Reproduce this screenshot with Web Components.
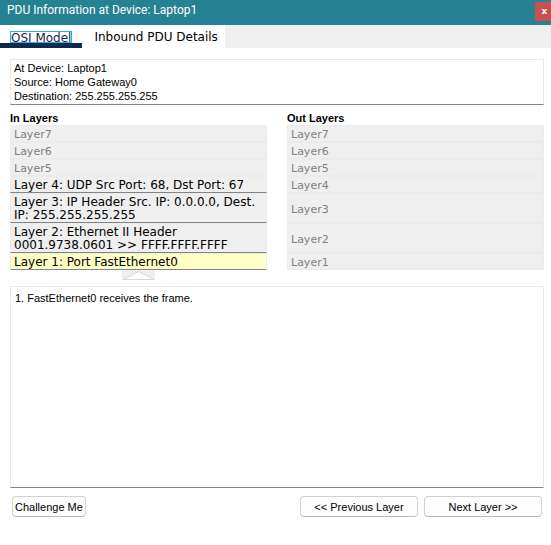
<!DOCTYPE html>
<html lang="en">
<head>
<meta charset="utf-8">
<title>PDU Information at Device: Laptop1</title>
<style>
  html, body { margin: 0; }
  body {
    --edge: #e9e9e9;
    --line: #848484;
    --tint: #efefef;
    --wide: Verdana, "DejaVu Sans", sans-serif;
    background: #fff;
    color: #000;
    font: 11px/14px "Liberation Sans", Arial, sans-serif;
  }
</style>
</head>
<body>
<pdu-window>
  <title-bar slot="title">PDU Information at Device: Laptop1</title-bar>
  <tab-strip slot="tabs">
    <tab-item selected>OSI Model</tab-item>
    <tab-item>Inbound PDU Details</tab-item>
  </tab-strip>
  <text-panel>
    <div>At Device: Laptop1</div>
    <div>Source: Home Gateway0</div>
    <div>Destination: 255.255.255.255</div>
  </text-panel>
  <layer-board>
    <layer-column heading="In Layers">
      <layer-row>Layer7</layer-row>
      <layer-row>Layer6</layer-row>
      <layer-row>Layer5</layer-row>
      <layer-row active>Layer 4: UDP Src Port: 68, Dst Port: 67</layer-row>
      <layer-row active>Layer 3: IP Header Src. IP: 0.0.0.0, Dest. IP: 255.255.255.255</layer-row>
      <layer-row active>Layer 2: Ethernet II Header 0001.9738.0601 &gt;&gt; FFFF.FFFF.FFFF</layer-row>
      <layer-row active current>Layer 1: Port FastEthernet0</layer-row>
      <up-arrow></up-arrow>
    </layer-column>
    <layer-column heading="Out Layers">
      <layer-row>Layer7</layer-row>
      <layer-row>Layer6</layer-row>
      <layer-row>Layer5</layer-row>
      <layer-row>Layer4</layer-row>
      <layer-row>Layer3</layer-row>
      <layer-row>Layer2</layer-row>
      <layer-row>Layer1</layer-row>
    </layer-column>
  </layer-board>
  <text-panel grow>1. FastEthernet0 receives the frame.</text-panel>
  <action-bar slot="actions">
    <push-button slot="start">Challenge Me</push-button>
    <push-button wide>&lt;&lt; Previous Layer</push-button>
    <push-button wide>Next Layer &gt;&gt;</push-button>
  </action-bar>
</pdu-window>

<script>
const define = (name, html) => customElements.define(name, class extends HTMLElement {
  constructor() {
    super();
    const t = document.createElement('template');
    t.innerHTML = html;
    this.attachShadow({ mode: 'open' }).append(t.content.cloneNode(true));
    const heading = this.shadowRoot.querySelector('[data-heading]');
    if (heading) heading.textContent = this.getAttribute('heading');
    const button = this.shadowRoot.querySelector('button[data-layer]');
    if (button) button.disabled = !this.hasAttribute('active');
    const tab = this.shadowRoot.querySelector('[role=tab]');
    if (tab) tab.setAttribute('aria-selected', this.hasAttribute('selected'));
  }
});

define('pdu-window', `
  <style>
    :host { display: flex; flex-direction: column; min-height: 100vh; }
    main { flex: 1; display: flex; flex-direction: column; padding: 11px 7px 0 10px; }
  </style>
  <slot name="title"></slot>
  <slot name="tabs"></slot>
  <main><slot></slot></main>
  <slot name="actions"></slot>`);

define('title-bar', `
  <style>
    :host { display: flex; align-items: center; justify-content: space-between; height: 25px; background: #258292; }
    h1 { margin: 0 0 5px 7px; color: #fff; font: 12px/16px "Segoe UI", Roboto, sans-serif; }
    button { width: 16px; height: 19px; margin: 0 0 2px; padding: 0 0 0 3px; border: 0; background: #c75050; color: #fff; font: bold 9px/19px "DejaVu Sans", sans-serif; }
  </style>
  <h1><slot></slot></h1>
  <button type="button" aria-label="Close">x</button>`);

define('tab-strip', `
  <style>:host { display: flex; height: 23px; background: var(--tint); }</style>
  <slot></slot>`);

define('tab-item', `
  <style>
    :host { display: flex; background: #fff; }
    button { padding: 0 7px 0 12px; border: 0; background: none; color: #000; font: 12px/24px var(--wide); }
    :host([selected]) { background: linear-gradient(#0a2a4e, #0a2a4e) bottom / 100% 5px no-repeat #fff; }
    :host([selected]) button { padding: 1px 11px 0; color: #1d1d55; }
    :host([selected]) span { display: block; box-sizing: border-box; height: 10px; line-height: 12px; outline: 1px solid #22b4e0; text-decoration: underline; }
  </style>
  <button type="button" role="tab"><span><slot></slot></span></button>`);

define('text-panel', `
  <style>
    :host { display: block; box-sizing: border-box; padding: 1px 3px; border: 1px solid var(--edge); border-bottom-color: var(--line); line-height: 14px; }
    :host([grow]) { flex: 1; padding: 4px; }
  </style>
  <slot></slot>`);

define('layer-board', `
  <style>
    :host { display: grid; grid-template-columns: 1fr 1fr; grid-template-rows: repeat(9, auto); column-gap: 20px; padding: 6px 0; }
  </style>
  <slot></slot>`);

define('layer-column', `
  <style>
    :host { display: grid; grid-row: 1 / 10; grid-template-rows: subgrid; }
    h2 { margin: 0; font: bold 11px/14px "Liberation Sans", Arial, sans-serif; }
  </style>
  <h2 data-heading></h2>
  <slot></slot>`);

define('layer-row', `
  <style>
    :host { display: flex; }
    button { flex: 1; padding: 2px 3px 0; border: 1px solid #ebebeb; background: var(--tint); color: #000; text-align: left; font: 12px/13px var(--wide); }
    button:disabled { color: #808080; font-size: 11px; }
    :host([active]) button { border-bottom-color: var(--line); }
    :host([current]) button { background: #ffffc6; }
  </style>
  <button type="button" data-layer><slot></slot></button>`);

define('up-arrow', `
  <style>:host, svg { display: block; } :host { justify-self: center; }</style>
  <svg width="33" height="10" viewBox="0 0 33 10" aria-hidden="true">
    <rect width="33" height="10" fill="#efefef"/>
    <path d="M1 9.5 16.5 1.5 32 9.5z" fill="#fff" stroke="#d8d8d8"/>
  </svg>`);

define('action-bar', `
  <style>:host { display: flex; gap: 6px; padding: 8px 9px 28px 12px; } span { flex: 1; }</style>
  <slot name="start"></slot><span></span><slot></slot>`);

define('push-button', `
  <style>
    :host { display: block; }
    button { display: block; height: 21px; padding: 1px 2px 0; border: 1px solid #d0d0d0; border-bottom-color: #bababa; border-radius: 4px; background: #fdfdfd; color: #000; font: 11px/19px "Liberation Sans", Arial, sans-serif; }
    :host([wide]) button { width: 118px; }
  </style>
  <button type="button"><slot></slot></button>`);
</script>
</body>
</html>
